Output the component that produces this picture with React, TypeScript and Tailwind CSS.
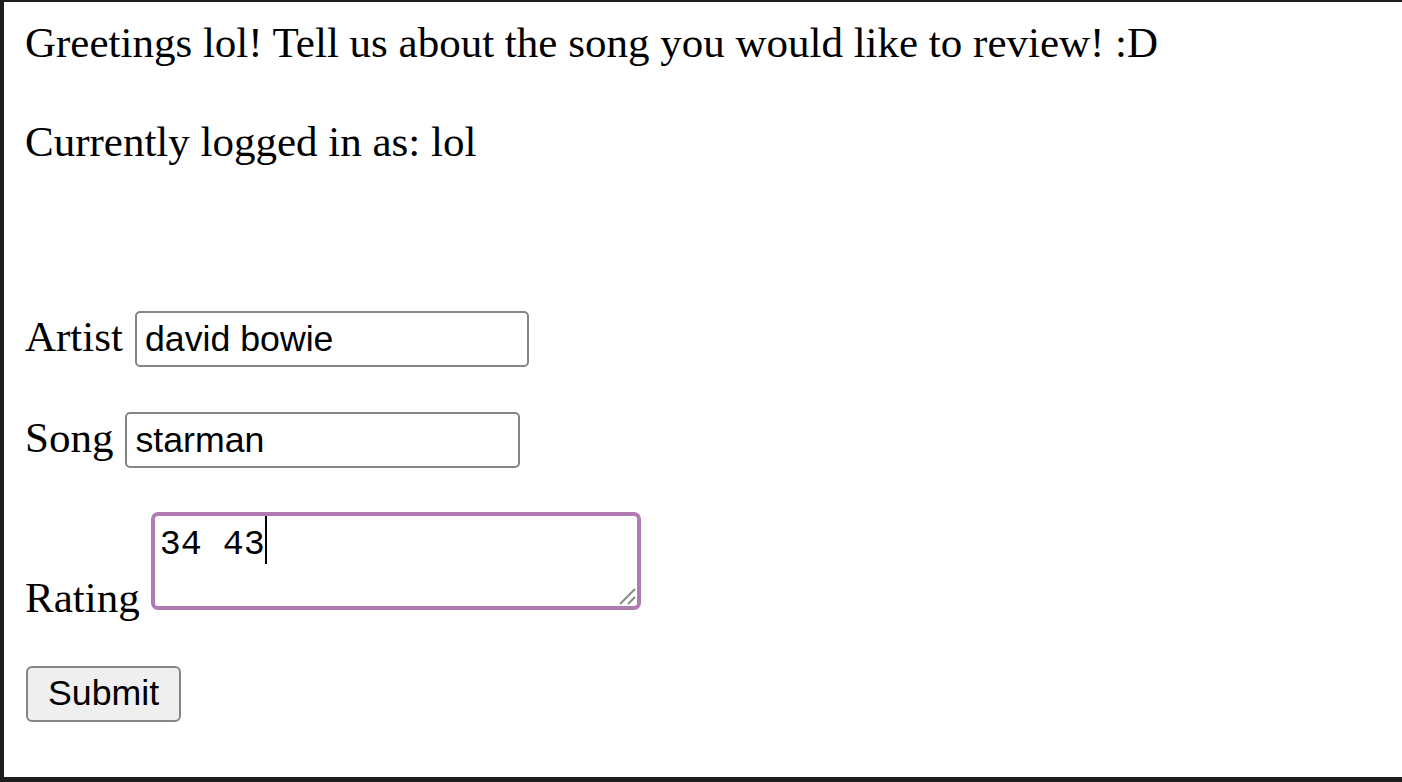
import React from "react";

export default function App() {
  return (
    <div className="w-[1402px] h-[782px] bg-[#1e1e1e] overflow-hidden">
      <div className="ml-[4px] mt-[2px] h-[775px] bg-white pl-[21px] pt-[16px] text-black">
        <p className="text-[43px] leading-[49px] [font-family:'Liberation_Serif','Times_New_Roman',serif]">
          Greetings lol! Tell us about the song you would like to review! :D
        </p>
        <p className="mt-[50px] text-[43px] leading-[49px] [font-family:'Liberation_Serif','Times_New_Roman',serif]">
          Currently logged in as: lol
        </p>

        <form className="mt-[145px] flex flex-col items-start" onSubmit={(e) => e.preventDefault()}>
          <div className="flex items-baseline">
            <label className="text-[43px] leading-[49px] [font-family:'Liberation_Serif','Times_New_Roman',serif]">
              Artist
            </label>
            <input
              defaultValue="david bowie"
              className="ml-[12px] w-[394px] h-[56px] border-[2px] border-[#858585] rounded-[5px] px-[8px] text-[35.7px] text-black [font-family:'Liberation_Sans',Arial,sans-serif] outline-none"
            />
          </div>
          <div className="mt-[45px] flex items-baseline">
            <label className="text-[43px] leading-[49px] [font-family:'Liberation_Serif','Times_New_Roman',serif]">
              Song
            </label>
            <input
              defaultValue="starman"
              className="ml-[12px] w-[395px] h-[56px] border-[2px] border-[#858585] rounded-[5px] px-[8px] text-[35.7px] text-black [font-family:'Liberation_Sans',Arial,sans-serif] outline-none"
            />
          </div>
          <div className="mt-[44px] flex items-end">
            <label className="text-[43px] leading-[49px] [font-family:'Liberation_Serif','Times_New_Roman',serif]">
              Rating
            </label>
            <div className="relative ml-[11px] mb-[12px] w-[490px] h-[98px] border-[4px] border-[#b07bb3] rounded-[7px] px-[5px] pt-0">
              <span className="text-[35px] leading-[41px] [font-family:'Liberation_Mono','DejaVu_Sans_Mono',monospace] text-black">
                34 43
              </span>
              <span className="inline-block align-[-10px] w-[2px] h-[48px] bg-black"></span>
              <svg className="absolute right-[1px] bottom-[1px]" width="18" height="18" viewBox="0 0 18 18">
                <line x1="2" y1="17" x2="17" y2="2" stroke="#8a8a8a" strokeWidth="2" />
                <line x1="10" y1="17" x2="17" y2="10" stroke="#8a8a8a" strokeWidth="2" />
              </svg>
            </div>
          </div>
          <button
            type="submit"
            className="mt-[44px] ml-[1px] h-[56px] px-[20px] bg-[#efefef] border-[2px] border-[#858585] rounded-[6px] text-[35.7px] leading-none text-black [font-family:'Liberation_Sans',Arial,sans-serif]"
          >
            Submit
          </button>
        </form>
      </div>
    </div>
  );
}
